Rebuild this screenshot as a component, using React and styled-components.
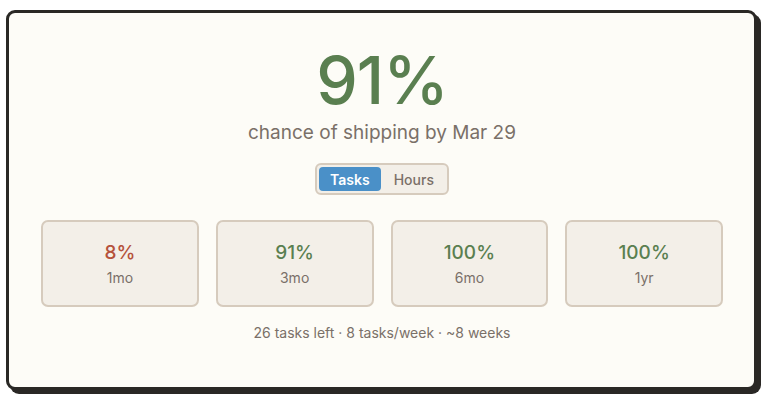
import React, { useState } from 'react'
import styled, { createGlobalStyle } from 'styled-components'

const GlobalStyle = createGlobalStyle`
  html, body {
    margin: 0;
    padding: 0;
    background: #ffffff;
  }
  body {
    font-family: Inter, "Liberation Sans", sans-serif;
  }
`

const Page = styled.div`
  padding: 10px 14px 12px 6px;
`

const Card = styled.div`
  background: #fdfcf7;
  border: 3px solid #2a2825;
  border-radius: 9px;
  box-shadow: 4px 4px 0 #2a2825;
  padding: 34px 31px 46px 32px;
  display: flex;
  flex-direction: column;
  align-items: center;
`

const BigNumber = styled.div`
  font-size: 66px;
  line-height: 1;
  font-weight: 500;
  color: #5a7f50;
  letter-spacing: -1px;
`

const Subtitle = styled.div`
  margin-top: 8px;
  font-size: 19px;
  color: #7a7068;
`

const Toggle = styled.div`
  margin-top: 19px;
  display: flex;
  padding: 2px;
  gap: 2px;
  background: #f3efe8;
  border: 2px solid #d6cbbd;
  border-radius: 6px;
`

const ToggleButton = styled.button`
  border: none;
  border-radius: 4px;
  font-family: inherit;
  font-size: 14px;
  font-weight: ${p => (p.$active ? 600 : 500)};
  padding: 0 11px;
  height: 24px;
  cursor: pointer;
  background: ${p => (p.$active ? '#4a90c8' : 'transparent')};
  color: ${p => (p.$active ? '#ffffff' : '#7a7068')};
`

const Grid = styled.div`
  margin-top: 25px;
  width: 100%;
  display: grid;
  grid-template-columns: repeat(4, 1fr);
  gap: 17px;
`

const StatBox = styled.div`
  height: 87px;
  box-sizing: border-box;
  background: #f3efe8;
  border: 2px solid #d6cbbd;
  border-radius: 7px;
  display: flex;
  flex-direction: column;
  align-items: center;
  justify-content: center;
  gap: 5px;
`

const StatValue = styled.div`
  font-size: 19px;
  font-weight: 500;
  color: ${p => (p.$bad ? '#b5523b' : '#5a7f50')};
`

const StatLabel = styled.div`
  font-size: 14px;
  color: #7a7068;
`

const Footer = styled.div`
  margin-top: 17px;
  font-size: 14px;
  color: #7a7068;
`

const stats = [
  { value: '8%', label: '1mo', bad: true },
  { value: '91%', label: '3mo' },
  { value: '100%', label: '6mo' },
  { value: '100%', label: '1yr' },
]

export default function App() {
  const [mode, setMode] = useState('tasks')
  return (
    <>
      <GlobalStyle />
      <Page>
        <Card>
          <BigNumber>91%</BigNumber>
          <Subtitle>chance of shipping by Mar 29</Subtitle>
          <Toggle>
            <ToggleButton $active={mode === 'tasks'} onClick={() => setMode('tasks')}>Tasks</ToggleButton>
            <ToggleButton $active={mode === 'hours'} onClick={() => setMode('hours')}>Hours</ToggleButton>
          </Toggle>
          <Grid>
            {stats.map(s => (
              <StatBox key={s.label}>
                <StatValue $bad={s.bad}>{s.value}</StatValue>
                <StatLabel>{s.label}</StatLabel>
              </StatBox>
            ))}
          </Grid>
          <Footer>26 tasks left · 8 tasks/week · ~8 weeks</Footer>
        </Card>
      </Page>
    </>
  )
}
